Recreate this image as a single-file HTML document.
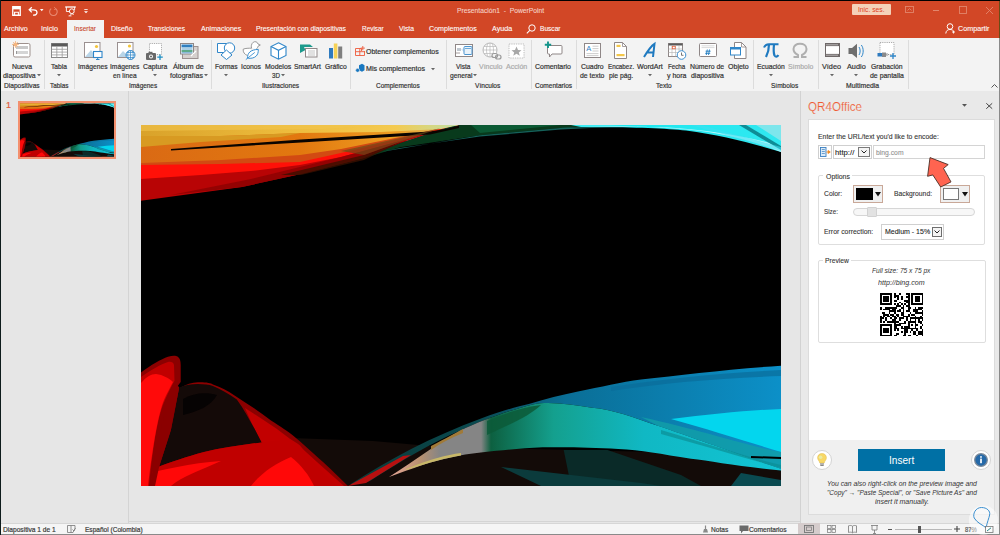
<!DOCTYPE html>
<html><head><meta charset="utf-8"><style>
*{margin:0;padding:0;box-sizing:border-box}
html,body{width:1000px;height:535px;overflow:hidden;background:#8A8A8A;font-family:"Liberation Sans",sans-serif;position:relative}
.a{position:absolute}
.t{position:absolute;white-space:nowrap;line-height:1;-webkit-text-stroke:0.2px currentColor}
.ns{-webkit-text-stroke:0}
.ls{-webkit-text-stroke:0.1px currentColor}
svg{overflow:visible}
</style></head><body>
<div class="a" style="left:0px;top:0px;width:1000px;height:1px;background:#000;"></div>
<div class="a" style="left:0px;top:0px;width:1px;height:535px;background:#0E1C1C;"></div>
<div class="a" style="left:999px;top:1px;width:1px;height:37px;background:#6A4C16;"></div>
<div class="a" style="left:1px;top:1px;width:998px;height:37px;background:#D24726;"></div>
<div class="a" style="left:67px;top:20px;width:37px;height:19px;background:#F3F3F3;"></div>
<div class="a" style="left:1px;top:38px;width:998px;height:53px;background:#F3F3F3;"></div>
<div class="a" style="left:1px;top:90.5px;width:998px;height:1px;background:#DCDCDC;"></div>
<div class="a" style="left:1px;top:91px;width:799px;height:433px;background:#E6E6E6;"></div>
<div class="a" style="left:128px;top:91px;width:1px;height:432px;background:#D4D4D4;"></div>
<div class="a" style="left:129px;top:521px;width:671px;height:1px;background:#D4D4D4;"></div>
<div class="a" style="left:800px;top:91px;width:199px;height:433px;background:#E9E9E9;"></div>
<div class="a" style="left:800px;top:91px;width:1px;height:433px;background:#D2D2D2;"></div>
<div class="a" style="left:1px;top:523px;width:998px;height:11px;background:#F5F5F5;"></div>
<div class="a" style="left:1px;top:523px;width:998px;height:1px;background:#D6D6D6;"></div>
<svg class="a" style="left:11.5px;top:5.5px;" width="9" height="10" viewBox="0 0 9 10"><path d="M0.75 0.75 H8.25 V9.25 H0.75Z" fill="none" stroke="#fff" stroke-width="1.3"/><rect x="0.75" y="0.75" width="7.5" height="2.6" fill="#fff"/><path d="M2.6 9.2 V6.3 H6.4 V9.2" fill="none" stroke="#fff" stroke-width="1.1"/></svg>
<svg class="a" style="left:27.5px;top:5.5px;" width="10" height="10" viewBox="0 0 10 10"><path d="M3.8 1.2 L1.2 3.8 L3.8 6.4 M1.2 3.8 H5.5 C7.6 3.8 9 5.2 9 6.6 C9 8 7.6 9.2 5.8 9.2 H5" fill="none" stroke="#fff" stroke-width="1.3"/></svg>
<svg class="a" style="left:39.8px;top:9.3px;" width="3.5" height="2.5" viewBox="0 0 3.5 2.5"><path d="M0 0 H3.5 L1.75 2.2Z" fill="#fff"/></svg>
<svg class="a" style="left:48.5px;top:6.5px;" width="9" height="9" viewBox="0 0 9 9"><path d="M6.3 1.4 A3.8 3.8 0 1 1 2.2 1.6" fill="none" stroke="#E98A72" stroke-width="1.1"/><path d="M5.2 0.2 L6.6 1.5 L5.4 3" fill="none" stroke="#E98A72" stroke-width="1"/></svg>
<svg class="a" style="left:64.5px;top:5.5px;" width="11" height="11" viewBox="0 0 11 11"><path d="M0.2 1 H10.8" stroke="#fff" stroke-width="1.3"/><path d="M1.4 1 V5.5 H4.5 M9.6 1 V4" fill="none" stroke="#fff" stroke-width="0.9"/><circle cx="6.8" cy="5.2" r="2.4" fill="none" stroke="#fff" stroke-width="1"/><path d="M4.8 9.8 C5.5 8 7 7.6 8.8 8.5 M3.5 9.9 H6.5" fill="none" stroke="#fff" stroke-width="0.8"/></svg>
<svg class="a" style="left:84px;top:8.5px;" width="4" height="4.5" viewBox="0 0 4 4.5"><path d="M0.3 0.5 H3.7" stroke="#fff" stroke-width="0.8"/><path d="M0 2.2 H4 L2 4.3Z" fill="#fff"/></svg>
<div class="t ls" style="left:456.75px;top:7.12px;font-size:7.3px;color:#F6D3C8;transform:scaleX(0.9228);transform-origin:0 0;">Presentación1&nbsp; -&nbsp; PowerPoint</div>
<div class="a" style="left:852px;top:4px;width:39px;height:11px;background:#F4D1B8;border-radius:1px"></div>
<div class="t ns" style="left:858.00px;top:6.45px;font-size:7.5px;color:#E0401E;transform:scaleX(0.8954);transform-origin:0 0;">Inic. ses.</div>
<svg class="a" style="left:905px;top:6px;" width="9" height="7" viewBox="0 0 9 7"><rect x="0.5" y="0.5" width="8" height="6" fill="none" stroke="#E2866C" stroke-width="0.9"/><path d="M2.5 4.5 L4.5 2.5 L6.5 4.5" fill="none" stroke="#E2866C" stroke-width="0.9"/></svg>
<div class="a" style="left:933px;top:10px;width:6px;height:1px;background:#E2866C;"></div>
<svg class="a" style="left:959px;top:6px;" width="8" height="8" viewBox="0 0 8 8"><rect x="0.5" y="0.5" width="7" height="7" fill="none" stroke="#E2866C" stroke-width="0.9"/></svg>
<svg class="a" style="left:986px;top:7px;" width="7" height="7" viewBox="0 0 7 7"><path d="M0 0 L7 7 M7 0 L0 7" stroke="#E2866C" stroke-width="0.9"/></svg>
<div class="t ls" style="left:4.30px;top:25.15px;font-size:7.5px;color:#FFFFFF;transform:scaleX(0.9477);transform-origin:0 0;">Archivo</div>
<div class="t ls" style="left:41.00px;top:25.15px;font-size:7.5px;color:#FFFFFF;transform:scaleX(0.9709);transform-origin:0 0;">Inicio</div>
<div class="t ls" style="left:111.00px;top:25.15px;font-size:7.5px;color:#FFFFFF;transform:scaleX(0.9209);transform-origin:0 0;">Diseño</div>
<div class="t ls" style="left:148.00px;top:25.15px;font-size:7.5px;color:#FFFFFF;transform:scaleX(0.8760);transform-origin:0 0;">Transiciones</div>
<div class="t ls" style="left:200.50px;top:25.15px;font-size:7.5px;color:#FFFFFF;transform:scaleX(0.9374);transform-origin:0 0;">Animaciones</div>
<div class="t ls" style="left:256.00px;top:25.15px;font-size:7.5px;color:#FFFFFF;transform:scaleX(0.9070);transform-origin:0 0;">Presentación con diapositivas</div>
<div class="t ls" style="left:362.00px;top:25.15px;font-size:7.5px;color:#FFFFFF;transform:scaleX(0.8555);transform-origin:0 0;">Revisar</div>
<div class="t ls" style="left:398.75px;top:25.15px;font-size:7.5px;color:#FFFFFF;transform:scaleX(0.9070);transform-origin:0 0;">Vista</div>
<div class="t ls" style="left:429.00px;top:25.15px;font-size:7.5px;color:#FFFFFF;transform:scaleX(0.9467);transform-origin:0 0;">Complementos</div>
<div class="t ls" style="left:491.75px;top:25.15px;font-size:7.5px;color:#FFFFFF;transform:scaleX(0.9583);transform-origin:0 0;">Ayuda</div>
<div class="t ls" style="left:540.00px;top:25.15px;font-size:7.5px;color:#FFFFFF;transform:scaleX(0.8782);transform-origin:0 0;">Buscar</div>
<div class="t ls" style="left:74.00px;top:25.15px;font-size:7.5px;color:#C9462A;transform:scaleX(0.8653);transform-origin:0 0;">Insertar</div>
<svg class="a" style="left:526px;top:24px;" width="10" height="10" viewBox="0 0 10 10"><circle cx="6" cy="4" r="3.2" fill="none" stroke="#fff" stroke-width="1"/><path d="M3.8 6.3 L0.8 9.3" stroke="#fff" stroke-width="1.1"/></svg>
<svg class="a" style="left:945px;top:23px;" width="11" height="11" viewBox="0 0 11 11"><circle cx="5" cy="3.5" r="2.8" fill="none" stroke="#fff" stroke-width="1"/><path d="M0.8 10.5 C1 7.5 3 6.5 5 6.5 C6.5 6.5 7.5 7 8 7.5" fill="none" stroke="#fff" stroke-width="1"/><path d="M8.5 7.5 V10.5 M7 9 H10" stroke="#fff" stroke-width="0.9"/></svg>
<div class="t ls" style="left:957.50px;top:25.15px;font-size:7.5px;color:#FFFFFF;transform:scaleX(0.9568);transform-origin:0 0;">Compartir</div>
<div class="a" style="left:44px;top:40px;width:1px;height:49px;background:#DCDCDC;"></div>
<div class="a" style="left:74px;top:40px;width:1px;height:49px;background:#DCDCDC;"></div>
<div class="a" style="left:211px;top:40px;width:1px;height:49px;background:#DCDCDC;"></div>
<div class="a" style="left:350px;top:40px;width:1px;height:49px;background:#DCDCDC;"></div>
<div class="a" style="left:445.5px;top:40px;width:1px;height:49px;background:#DCDCDC;"></div>
<div class="a" style="left:531px;top:40px;width:1px;height:49px;background:#DCDCDC;"></div>
<div class="a" style="left:575.5px;top:40px;width:1px;height:49px;background:#DCDCDC;"></div>
<div class="a" style="left:753px;top:40px;width:1px;height:49px;background:#DCDCDC;"></div>
<div class="a" style="left:817.5px;top:40px;width:1px;height:49px;background:#DCDCDC;"></div>
<div class="a" style="left:907.5px;top:40px;width:1px;height:49px;background:#DCDCDC;"></div>
<div class="t " style="left:12.00px;top:62.62px;font-size:7.3px;color:#333333;transform:scaleX(0.9478);transform-origin:0 0;">Nueva</div>
<div class="t " style="left:51.00px;top:62.62px;font-size:7.3px;color:#333333;transform:scaleX(0.9168);transform-origin:0 0;">Tabla</div>
<div class="t " style="left:77.75px;top:62.62px;font-size:7.3px;color:#333333;transform:scaleX(0.9202);transform-origin:0 0;">Imágenes</div>
<div class="t " style="left:110.20px;top:62.62px;font-size:7.3px;color:#333333;transform:scaleX(0.9170);transform-origin:0 0;">Imágenes</div>
<div class="t " style="left:142.50px;top:62.62px;font-size:7.3px;color:#333333;transform:scaleX(0.9395);transform-origin:0 0;">Captura</div>
<div class="t " style="left:173.00px;top:62.62px;font-size:7.3px;color:#333333;transform:scaleX(0.9971);transform-origin:0 0;">Álbum de</div>
<div class="t " style="left:215.00px;top:62.62px;font-size:7.3px;color:#333333;transform:scaleX(0.9094);transform-origin:0 0;">Formas</div>
<div class="t " style="left:241.25px;top:62.62px;font-size:7.3px;color:#333333;transform:scaleX(0.9299);transform-origin:0 0;">Iconos</div>
<div class="t " style="left:265.00px;top:62.62px;font-size:7.3px;color:#333333;transform:scaleX(0.9513);transform-origin:0 0;">Modelos</div>
<div class="t " style="left:294.40px;top:62.62px;font-size:7.3px;color:#333333;transform:scaleX(0.9324);transform-origin:0 0;">SmartArt</div>
<div class="t " style="left:324.75px;top:62.62px;font-size:7.3px;color:#333333;transform:scaleX(0.9244);transform-origin:0 0;">Gráfico</div>
<div class="t " style="left:455.60px;top:62.62px;font-size:7.3px;color:#333333;transform:scaleX(0.8945);transform-origin:0 0;">Vista</div>
<div class="t " style="left:535.00px;top:62.62px;font-size:7.3px;color:#333333;transform:scaleX(0.9540);transform-origin:0 0;">Comentario</div>
<div class="t " style="left:580.90px;top:62.62px;font-size:7.3px;color:#333333;transform:scaleX(0.9481);transform-origin:0 0;">Cuadro</div>
<div class="t " style="left:607.50px;top:62.62px;font-size:7.3px;color:#333333;transform:scaleX(0.8624);transform-origin:0 0;">Encabez.</div>
<div class="t " style="left:636.90px;top:62.62px;font-size:7.3px;color:#333333;transform:scaleX(0.9704);transform-origin:0 0;">WordArt</div>
<div class="t " style="left:667.75px;top:62.62px;font-size:7.3px;color:#333333;transform:scaleX(0.8502);transform-origin:0 0;">Fecha</div>
<div class="t " style="left:690.30px;top:62.62px;font-size:7.3px;color:#333333;transform:scaleX(0.9443);transform-origin:0 0;">Número de</div>
<div class="t " style="left:728.00px;top:62.62px;font-size:7.3px;color:#333333;transform:scaleX(0.9647);transform-origin:0 0;">Objeto</div>
<div class="t " style="left:756.90px;top:62.62px;font-size:7.3px;color:#333333;transform:scaleX(0.9274);transform-origin:0 0;">Ecuación</div>
<div class="t " style="left:822.00px;top:62.62px;font-size:7.3px;color:#333333;transform:scaleX(0.9960);transform-origin:0 0;">Vídeo</div>
<div class="t " style="left:847.00px;top:62.62px;font-size:7.3px;color:#333333;transform:scaleX(1.0016);transform-origin:0 0;">Audio</div>
<div class="t " style="left:870.80px;top:62.62px;font-size:7.3px;color:#333333;transform:scaleX(0.9352);transform-origin:0 0;">Grabación</div>
<div class="t " style="left:479.40px;top:62.62px;font-size:7.3px;color:#ABABAB;transform:scaleX(0.9590);transform-origin:0 0;">Vínculo</div>
<div class="t " style="left:505.60px;top:62.62px;font-size:7.3px;color:#ABABAB;transform:scaleX(0.9721);transform-origin:0 0;">Acción</div>
<div class="t " style="left:787.75px;top:62.62px;font-size:7.3px;color:#ABABAB;transform:scaleX(0.9428);transform-origin:0 0;">Símbolo</div>
<div class="t " style="left:2.70px;top:71.62px;font-size:7.3px;color:#333333;transform:scaleX(0.9480);transform-origin:0 0;">diapositiva</div>
<div class="t " style="left:113.00px;top:71.62px;font-size:7.3px;color:#333333;transform:scaleX(0.9085);transform-origin:0 0;">en línea</div>
<div class="t " style="left:169.60px;top:71.62px;font-size:7.3px;color:#333333;transform:scaleX(0.9567);transform-origin:0 0;">fotografías</div>
<div class="t " style="left:272.00px;top:71.62px;font-size:7.3px;color:#333333;transform:scaleX(0.8572);transform-origin:0 0;">3D</div>
<div class="t " style="left:449.60px;top:71.62px;font-size:7.3px;color:#333333;transform:scaleX(0.9198);transform-origin:0 0;">general</div>
<div class="t " style="left:579.60px;top:71.62px;font-size:7.3px;color:#333333;transform:scaleX(0.9394);transform-origin:0 0;">de texto</div>
<div class="t " style="left:608.75px;top:71.62px;font-size:7.3px;color:#333333;transform:scaleX(0.9335);transform-origin:0 0;">pie pág.</div>
<div class="t " style="left:666.50px;top:71.62px;font-size:7.3px;color:#333333;transform:scaleX(0.9611);transform-origin:0 0;">y hora</div>
<div class="t " style="left:690.80px;top:71.62px;font-size:7.3px;color:#333333;transform:scaleX(0.9509);transform-origin:0 0;">diapositiva</div>
<div class="t " style="left:869.60px;top:71.62px;font-size:7.3px;color:#333333;transform:scaleX(0.9491);transform-origin:0 0;">de pantalla</div>
<svg class="a" style="left:37px;top:74.3px;" width="4" height="3" viewBox="0 0 4 3"><path d="M0 0 H4 L2 2.2Z" fill="#666"/></svg>
<svg class="a" style="left:203.9px;top:74.3px;" width="4" height="3" viewBox="0 0 4 3"><path d="M0 0 H4 L2 2.2Z" fill="#666"/></svg>
<svg class="a" style="left:281.4px;top:74.3px;" width="4" height="3" viewBox="0 0 4 3"><path d="M0 0 H4 L2 2.2Z" fill="#666"/></svg>
<svg class="a" style="left:473.2px;top:74.3px;" width="4" height="3" viewBox="0 0 4 3"><path d="M0 0 H4 L2 2.2Z" fill="#666"/></svg>
<svg class="a" style="left:57px;top:74.3px;" width="4" height="3" viewBox="0 0 4 3"><path d="M0 0 H4 L2 2.2Z" fill="#666"/></svg>
<svg class="a" style="left:153px;top:74.3px;" width="4" height="3" viewBox="0 0 4 3"><path d="M0 0 H4 L2 2.2Z" fill="#666"/></svg>
<svg class="a" style="left:224px;top:74.3px;" width="4" height="3" viewBox="0 0 4 3"><path d="M0 0 H4 L2 2.2Z" fill="#666"/></svg>
<svg class="a" style="left:647.8px;top:74.3px;" width="4" height="3" viewBox="0 0 4 3"><path d="M0 0 H4 L2 2.2Z" fill="#666"/></svg>
<svg class="a" style="left:769px;top:74.3px;" width="4" height="3" viewBox="0 0 4 3"><path d="M0 0 H4 L2 2.2Z" fill="#666"/></svg>
<svg class="a" style="left:829.5px;top:74.3px;" width="4" height="3" viewBox="0 0 4 3"><path d="M0 0 H4 L2 2.2Z" fill="#666"/></svg>
<svg class="a" style="left:854.4px;top:74.3px;" width="4" height="3" viewBox="0 0 4 3"><path d="M0 0 H4 L2 2.2Z" fill="#666"/></svg>
<div class="t " style="left:3.75px;top:82.32px;font-size:7.3px;color:#333333;transform:scaleX(0.9058);transform-origin:0 0;">Diapositivas</div>
<div class="t " style="left:50.00px;top:82.32px;font-size:7.3px;color:#333333;transform:scaleX(0.8767);transform-origin:0 0;">Tablas</div>
<div class="t " style="left:128.75px;top:82.32px;font-size:7.3px;color:#333333;transform:scaleX(0.8781);transform-origin:0 0;">Imágenes</div>
<div class="t " style="left:262.25px;top:82.32px;font-size:7.3px;color:#333333;transform:scaleX(0.9065);transform-origin:0 0;">Ilustraciones</div>
<div class="t " style="left:376.25px;top:82.32px;font-size:7.3px;color:#333333;transform:scaleX(0.8912);transform-origin:0 0;">Complementos</div>
<div class="t " style="left:475.25px;top:82.32px;font-size:7.3px;color:#333333;transform:scaleX(0.9054);transform-origin:0 0;">Vínculos</div>
<div class="t " style="left:534.75px;top:82.32px;font-size:7.3px;color:#333333;transform:scaleX(0.8977);transform-origin:0 0;">Comentarios</div>
<div class="t " style="left:656.25px;top:82.32px;font-size:7.3px;color:#333333;transform:scaleX(0.8969);transform-origin:0 0;">Texto</div>
<div class="t " style="left:771.25px;top:82.32px;font-size:7.3px;color:#333333;transform:scaleX(0.8955);transform-origin:0 0;">Símbolos</div>
<div class="t " style="left:845.60px;top:82.32px;font-size:7.3px;color:#333333;transform:scaleX(0.9406);transform-origin:0 0;">Multimedia</div>
<div class="t " style="left:366.25px;top:47.82px;font-size:7.3px;color:#333333;transform:scaleX(0.9588);transform-origin:0 0;">Obtener complementos</div>
<div class="t " style="left:366.25px;top:65.32px;font-size:7.3px;color:#333333;transform:scaleX(0.9696);transform-origin:0 0;">Mis complementos</div>
<svg class="a" style="left:430.5px;top:67.8px;" width="4" height="3" viewBox="0 0 4 3"><path d="M0 0 H4 L2 2.2Z" fill="#666"/></svg>
<svg class="a" style="left:991px;top:84px;" width="7" height="4" viewBox="0 0 7 4"><path d="M0.5 3.5 L3.5 0.5 L6.5 3.5" fill="none" stroke="#555" stroke-width="1"/></svg>
<svg class="a" style="left:13px;top:43px;" width="18" height="15" viewBox="0 0 18 15"><rect x="0.5" y="0.5" width="16.5" height="13.5" rx="1.5" fill="#fff" stroke="#9E918D" stroke-width="1"/><rect x="3" y="3" width="12" height="3" fill="#C9C9C9"/><rect x="3" y="8" width="12" height="3" fill="#D5D5D5"/><rect x="3" y="8" width="1" height="3" fill="#999"/></svg>
<svg class="a" style="left:12px;top:41px;" width="7" height="7" viewBox="0 0 7 7"><circle cx="3.5" cy="3.5" r="2" fill="#F5B57E"/><path d="M3.5 0 V7 M0 3.5 H7 M1 1 L6 6 M6 1 L1 6" stroke="#F5B57E" stroke-width="0.8"/></svg>
<svg class="a" style="left:51px;top:43px;" width="17" height="15" viewBox="0 0 17 15"><rect x="0.5" y="0.5" width="16" height="14" fill="#fff" stroke="#888" stroke-width="1"/><rect x="0.5" y="0.5" width="16" height="3" fill="#5A5A5A"/><path d="M5.8 3.5 V14.5 M11.2 3.5 V14.5 M0.5 6.3 H16.5 M0.5 9.1 H16.5 M0.5 11.9 H16.5" stroke="#9A9A9A" stroke-width="0.8"/></svg>
<svg class="a" style="left:84px;top:42px;" width="19" height="18" viewBox="0 0 19 18"><rect x="0.5" y="0.5" width="15.5" height="15" fill="#fff" stroke="#9A9090" stroke-width="1"/><path d="M1 15 L7 8 L10 12 V15Z" fill="#B9D5E8"/><circle cx="12.5" cy="4.5" r="1.6" fill="#F3C43A"/><rect x="9.5" y="9.5" width="8.5" height="6" fill="#fff" stroke="#2F86C9" stroke-width="1.1"/><path d="M13.7 15.5 V17.3 M12 17.5 H15.5" stroke="#2F86C9" stroke-width="1"/></svg>
<svg class="a" style="left:117px;top:42px;" width="19" height="18" viewBox="0 0 19 18"><rect x="0.5" y="0.5" width="15.5" height="15" fill="#fff" stroke="#9A9090" stroke-width="1"/><path d="M1 15 L6 9 L9 12 V15Z" fill="#B9D5E8"/><circle cx="12.5" cy="4" r="1.6" fill="#F3C43A"/><circle cx="13.5" cy="13" r="4.5" fill="#fff" stroke="#2F86C9" stroke-width="1"/><path d="M9 13 H18 M13.5 8.5 V17.5 M10 10.5 H17 M10 15.5 H17 M11.5 9 C10.5 12 10.5 14 11.5 17 M15.5 9 C16.5 12 16.5 14 15.5 17" stroke="#2F86C9" stroke-width="0.7" fill="none"/></svg>
<svg class="a" style="left:146px;top:43px;" width="18" height="17" viewBox="0 0 18 17"><rect x="3.5" y="0.5" width="12" height="11" fill="#fff" stroke="#999" stroke-width="0.8" stroke-dasharray="1.2 1"/><rect x="0" y="10" width="10" height="7" rx="1" fill="#6A6A6A"/><rect x="2.5" y="8.8" width="4" height="2" fill="#6A6A6A"/><circle cx="5" cy="13.5" r="2" fill="#fff"/><circle cx="5" cy="13.5" r="1.1" fill="#6A6A6A"/><path d="M14 11.5 V17 M11.3 14.2 H16.8" stroke="#1F8FC4" stroke-width="1.3"/></svg>
<svg class="a" style="left:180px;top:43px;" width="19" height="16" viewBox="0 0 19 16"><rect x="2.5" y="3.5" width="15.5" height="12" fill="#D5D0CE" stroke="#9A9090" stroke-width="1"/><rect x="0.5" y="0.5" width="13" height="10.5" fill="#fff" stroke="#8F8787" stroke-width="1"/><rect x="1.5" y="1.5" width="11" height="3" fill="#2F7FC0"/><path d="M1.5 4.5 H12.5 V7 H1.5Z" fill="#A9CFE6"/><rect x="1.5" y="7" width="11" height="2" fill="#5DAA8A"/><rect x="1.5" y="9" width="11" height="1.5" fill="#8CB9D8"/><path d="M11 13 L16 8" stroke="#fff" stroke-width="1.2"/></svg>
<svg class="a" style="left:217px;top:42px;" width="19" height="18" viewBox="0 0 19 18"><path d="M0.5 1.5 H9.5 V10.5 H0.5Z" fill="#fff" stroke="#2F86C9" stroke-width="1"/><circle cx="12.5" cy="6" r="5.2" fill="#fff" stroke="#2F86C9" stroke-width="1"/><path d="M9.5 8 L15 13 L9.5 17.5 L4 13Z" fill="#fff" stroke="#2F86C9" stroke-width="1"/></svg>
<svg class="a" style="left:242px;top:40px;" width="19" height="20" viewBox="0 0 19 20"><path d="M9.6 8.2 C9 6.8 9.2 3.8 11.2 2.3 C13 1 15.5 1.8 16 4 L18.3 5 L16 6.3 C15.8 7.5 15.2 8.2 14.5 8.8 M5.5 15.5 C2.5 14.5 0.8 12 1.2 9.2 C3.5 8.2 6.5 8.2 9.6 8.2" fill="#fff" stroke="#8E8E8E" stroke-width="0.9"/><path d="M5.6 18.2 C5.2 13 8.6 9.6 16.3 9.4 C16.6 15.6 13 18.6 6.6 18.3Z" fill="#fff" stroke="#3A8FD0" stroke-width="1"/><path d="M3.8 19.6 L12.8 12.4" stroke="#3A8FD0" stroke-width="0.9"/></svg>
<svg class="a" style="left:270px;top:42px;" width="17" height="18" viewBox="0 0 17 18"><path d="M8.5 0.8 L16 4.5 V13.5 L8.5 17.2 L1 13.5 V4.5Z" fill="#fff" stroke="#2F86C9" stroke-width="1.1"/><path d="M1 4.5 L8.5 8.3 L16 4.5 M8.5 8.3 V17" fill="none" stroke="#2F86C9" stroke-width="1.1"/></svg>
<svg class="a" style="left:300px;top:44px;" width="18" height="14" viewBox="0 0 18 14"><path d="M0 0.5 H10 L13 3 H4 L5.5 6 L0 9Z" fill="#1D9A8C"/><rect x="5.5" y="4.5" width="11.5" height="8.5" fill="#fff" stroke="#8F8787" stroke-width="1"/><path d="M8 7 H15 M8 9 H15 M8 11 H15" stroke="#9A9A9A" stroke-width="0.6"/></svg>
<svg class="a" style="left:329px;top:43px;" width="14" height="16" viewBox="0 0 14 16"><rect x="0" y="5" width="4" height="10.5" fill="#2F7BBF"/><rect x="4.8" y="0.5" width="3.6" height="15" fill="#F6D257"/><rect x="9.2" y="3.5" width="4" height="12" fill="#7F7F7F"/></svg>
<svg class="a" style="left:355px;top:46px;" width="10" height="10" viewBox="0 0 10 10"><path d="M0.5 2.5 H6.5 M0.5 2.5 V9.5 H9.5 V5 M4.8 2.5 V9.5 M0.5 5.7 H9.5 M6.5 2.5 V5" fill="none" stroke="#EE5A3A" stroke-width="0.9"/><path d="M7.8 0 V4.2 M5.7 2.1 H9.9" stroke="#EE5A3A" stroke-width="0.9"/></svg>
<svg class="a" style="left:355px;top:63px;" width="10" height="10" viewBox="0 0 10 10"><path d="M4 2.2 L7 0.8 L9.5 2.2 V7.2 L7 8.8 L4 7.2Z" fill="#1A78C0"/><circle cx="2.6" cy="7.3" r="2" fill="#1A78C0" stroke="#F3F3F3" stroke-width="0.6"/></svg>
<svg class="a" style="left:455px;top:44px;" width="18" height="13" viewBox="0 0 18 13"><rect x="0.5" y="0.5" width="17" height="12" fill="#fff" stroke="#8F8787" stroke-width="1"/><path d="M0.5 9 H5" stroke="#8F8787" stroke-width="0.8"/><rect x="2" y="4" width="4" height="3" fill="#C0C8D0"/><path d="M6 5.5 L9 4 V8 Z" fill="#D6E6F3"/><rect x="9" y="2.5" width="8" height="8" rx="1" fill="#EAF3FA" stroke="#4C95CF" stroke-width="1"/><path d="M10 4.5 H16" stroke="#4C95CF" stroke-width="0.8"/></svg>
<svg class="a" style="left:482px;top:42px;" width="20" height="18" viewBox="0 0 20 18"><circle cx="8" cy="8" r="7" fill="#fff" stroke="#B8B8B8" stroke-width="1"/><path d="M1 8 H15 M8 1 V15 M2 4.5 H14 M2 11.5 H14 M6 1.5 C4 5 4 11 6 14.5 M10 1.5 C12 5 12 11 10 14.5" stroke="#B8B8B8" stroke-width="0.7" fill="none"/><rect x="10" y="11.5" width="5.5" height="4" rx="2" fill="#f3f3f3" stroke="#9A9A9A" stroke-width="1.2"/><rect x="13.5" y="13" width="5.5" height="4" rx="2" fill="none" stroke="#9A9A9A" stroke-width="1.2"/></svg>
<svg class="a" style="left:508px;top:43px;" width="17" height="16" viewBox="0 0 17 16"><rect x="1" y="1" width="15" height="14" fill="#fff" stroke="#B0B0B0" stroke-width="0.8" stroke-dasharray="1.3 1"/><path d="M8.5 3.5 L10 7 L13.5 7.2 L10.8 9.4 L11.8 12.8 L8.5 10.8 L5.2 12.8 L6.2 9.4 L3.5 7.2 L7 7Z" fill="#A8A8A8"/></svg>
<svg class="a" style="left:544px;top:41px;" width="19" height="18" viewBox="0 0 19 18"><path d="M3.5 4.5 H17 Q18 4.5 18 5.5 V12 Q18 13 17 13 H8 L5.5 16 V13 H4.5 Q3.5 13 3.5 12Z" fill="#fff" stroke="#8F8787" stroke-width="1"/><path d="M4 0.5 V7 M0.8 3.7 H7.2" stroke="#14958B" stroke-width="1.9"/></svg>
<svg class="a" style="left:584px;top:43px;" width="17" height="15" viewBox="0 0 17 15"><rect x="0.5" y="0.5" width="16" height="14" fill="#fff" stroke="#8F8787" stroke-width="1"/><text x="2.2" y="8.3" font-family="Liberation Sans" font-size="7.5" fill="#2F7FC4">A</text><path d="M8.5 3.2 H14.5 M8.5 5.6 H14.5 M8.5 8 H14.5 M2.5 10.6 H14.5 M2.5 12.6 H14.5" stroke="#ABABAB" stroke-width="0.6"/></svg>
<svg class="a" style="left:614px;top:42px;" width="13" height="17" viewBox="0 0 13 17"><path d="M0.5 0.5 H8.5 L12.5 4.5 V16.5 H0.5Z" fill="#fff" stroke="#8F8787" stroke-width="1"/><path d="M8.5 0.5 V4.5 H12.5" fill="none" stroke="#8F8787" stroke-width="0.8"/><rect x="2.5" y="2.8" width="4" height="2.2" fill="#F4C74A"/><rect x="2.5" y="12" width="8" height="2.2" fill="#F4C74A"/></svg>
<svg class="a" style="left:643px;top:43px;" width="13" height="15" viewBox="0 0 13 15"><path d="M1 14 C4 9 8 3 11.5 0.8 L10 14 M3.5 9.5 H10.5" fill="none" stroke="#1F7AC0" stroke-width="2"/></svg>
<svg class="a" style="left:668px;top:43px;" width="19" height="17" viewBox="0 0 19 17"><rect x="0.5" y="0.5" width="14" height="13" fill="#fff" stroke="#8F8787" stroke-width="1"/><rect x="0.5" y="0.5" width="14" height="2" fill="#5A5A5A"/><path d="M4 2.5 V13.5 M7.5 2.5 V13.5 M11 2.5 V13.5 M0.5 6 H14.5 M0.5 9.5 H14.5" stroke="#B0B0B0" stroke-width="0.6"/><rect x="4.3" y="3.3" width="2.9" height="2.5" fill="none" stroke="#E8633F" stroke-width="0.8"/><circle cx="13.5" cy="12" r="4.3" fill="#fff" stroke="#3A8ED0" stroke-width="1"/><path d="M13.5 9.5 V12.3 H15.5" fill="none" stroke="#555" stroke-width="0.8"/></svg>
<svg class="a" style="left:699px;top:43px;" width="18" height="14" viewBox="0 0 18 14"><rect x="0.5" y="0.5" width="17" height="13" rx="1" fill="#fff" stroke="#8F8787" stroke-width="1"/><path d="M2.5 2.8 H15.5 M2.5 4.6 H15.5" stroke="#D0D0D0" stroke-width="0.8"/><path d="M8.3 6.5 L7.3 12 M10.5 6.5 L9.5 12 M6.6 8.2 H11.6 M6.2 10.3 H11.2" stroke="#1F7AC0" stroke-width="0.9"/></svg>
<svg class="a" style="left:730px;top:42px;" width="17" height="17" viewBox="0 0 17 17"><path d="M4.5 0.5 H11.5 L16 5 V16.5 H4.5Z" fill="#fff" stroke="#8F8787" stroke-width="1"/><path d="M11.5 0.5 V5 H16" fill="none" stroke="#8F8787" stroke-width="0.8"/><rect x="0.5" y="5.5" width="10" height="7.5" fill="#fff" stroke="#2F86C9" stroke-width="1"/><rect x="0.5" y="5.5" width="10" height="2" fill="#2F86C9"/></svg>
<svg class="a" style="left:763px;top:43px;" width="16" height="15" viewBox="0 0 16 15"><path d="M1 4.5 C2 2 3 1.2 6 1.2 H15.5" fill="none" stroke="#1F7AC0" stroke-width="2"/><path d="M6 1.5 C6 6 5 10 3 14" fill="none" stroke="#1F7AC0" stroke-width="2.2"/><path d="M11 1.5 C10.5 6 10.5 10 11.5 12.5 C12.5 14 14.5 14 15.3 12" fill="none" stroke="#1F7AC0" stroke-width="2.2"/></svg>
<svg class="a" style="left:792px;top:43px;" width="16" height="15" viewBox="0 0 16 15"><path d="M1.5 14 H6 V12 C3 10.5 1.5 8.5 1.5 6 C1.5 2.5 4.5 0.8 8 0.8 C11.5 0.8 14.5 2.5 14.5 6 C14.5 8.5 13 10.5 10 12 V14 H14.5" fill="none" stroke="#AFAFAF" stroke-width="2"/></svg>
<svg class="a" style="left:825px;top:43px;" width="15" height="14" viewBox="0 0 15 14"><rect x="0.5" y="0.5" width="14" height="13" fill="#fff" stroke="#6E6868" stroke-width="1"/><rect x="0.5" y="0.5" width="14" height="2.6" fill="#6E6868"/><rect x="0.5" y="10.9" width="14" height="2.6" fill="#6E6868"/><rect x="1.5" y="1.3" width="1" height="1" fill="#fff"/><rect x="1.5" y="11.7" width="1" height="1" fill="#fff"/><rect x="3.5" y="1.3" width="1" height="1" fill="#fff"/><rect x="3.5" y="11.7" width="1" height="1" fill="#fff"/><rect x="5.5" y="1.3" width="1" height="1" fill="#fff"/><rect x="5.5" y="11.7" width="1" height="1" fill="#fff"/><rect x="7.5" y="1.3" width="1" height="1" fill="#fff"/><rect x="7.5" y="11.7" width="1" height="1" fill="#fff"/><rect x="9.5" y="1.3" width="1" height="1" fill="#fff"/><rect x="9.5" y="11.7" width="1" height="1" fill="#fff"/><rect x="11.5" y="1.3" width="1" height="1" fill="#fff"/><rect x="11.5" y="11.7" width="1" height="1" fill="#fff"/></svg>
<svg class="a" style="left:848px;top:43px;" width="17" height="16" viewBox="0 0 17 16"><path d="M0.5 5 H4 L9 0.8 V15 L4 11 H0.5Z" fill="#6E6E6E"/><path d="M11 4 C12.5 6 12.5 10 11 12 M13.3 2 C15.8 5 15.8 11 13.3 14" fill="none" stroke="#2F86C9" stroke-width="1"/></svg>
<svg class="a" style="left:877px;top:42px;" width="19" height="17" viewBox="0 0 19 17"><rect x="3" y="0.5" width="14" height="12" fill="#fff" stroke="#999" stroke-width="0.8" stroke-dasharray="1.2 1"/><rect x="0.5" y="11" width="4.5" height="3.5" fill="#2F7BBF"/><rect x="5" y="10.5" width="4" height="4.5" fill="#8A8A8A"/><path d="M9.5 11 L11 12.5 L9.5 14" fill="none" stroke="#555" stroke-width="0.6"/><path d="M16 11 V17 M13 14 H19" stroke="#2F86C9" stroke-width="1.3"/></svg>
<svg class="a" style="left:141px;top:125px;overflow:hidden" width="640" height="361" viewBox="0 0 640 361">
<defs>
<linearGradient id="gold" x1="0" y1="0" x2="1" y2="0"><stop offset="0" stop-color="#D9A22A"/><stop offset="0.45" stop-color="#EDBB3C"/><stop offset="0.8" stop-color="#F4CA50"/><stop offset="1" stop-color="#BFE0A8"/></linearGradient>
<linearGradient id="orng" x1="0" y1="0" x2="1" y2="0"><stop offset="0" stop-color="#DA6A14"/><stop offset="0.5" stop-color="#E2780F"/><stop offset="0.8" stop-color="#EE9E22"/><stop offset="1" stop-color="#D6C070"/></linearGradient>
<linearGradient id="cyan" x1="0" y1="0" x2="1" y2="0"><stop offset="0" stop-color="#20C8C8"/><stop offset="0.3" stop-color="#10E8F0"/><stop offset="1" stop-color="#30E8F0"/></linearGradient>
<linearGradient id="blue" x1="0" y1="0" x2="0" y2="1"><stop offset="0" stop-color="#0A5E7E"/><stop offset="0.35" stop-color="#0B82B4"/><stop offset="1" stop-color="#0C9AD0"/></linearGradient>
<linearGradient id="teal" x1="0" y1="0" x2="1" y2="0"><stop offset="0" stop-color="#0E6A44"/><stop offset="0.25" stop-color="#15A08E"/><stop offset="0.55" stop-color="#10B8C4"/><stop offset="1" stop-color="#10C8D8"/></linearGradient>
</defs>
<rect x="0" y="0" width="640" height="361" fill="#000"/>
<!-- top right cyan -->
<path d="M250 0 H640 V27 C610 18 580 10 545 5.5 C520 2.5 470 1.5 412 2.5 C380 4 350 7 340 9.4 L268 20Z" fill="url(#cyan)"/>
<path d="M420 1 C470 0 520 1 560 6 C590 10 615 17 640 27 L640 21 C610 12 570 5 520 2Z" fill="#D8FAFF" opacity="0.8"/>
<path d="M615 0 L640 16 V0Z" fill="#7EE6EC"/><path d="M605 0 L640 21 V25 L598 0Z" fill="#0E8C96"/>
<path d="M560 0 L640 22 V26 L550 0Z" fill="#40E0F0" opacity="0.6"/>
<!-- green wedge -->
<path d="M223 33 L259 22.2 L339 10.2 L419 3 L440 2 L430 0 L311 0 L259 18Z" fill="#083A1C"/>
<path d="M330 0 L420 0 L400 2 L339 8 Z" fill="#0B5A34"/>
<path d="M240 27 L339 10.2 L419 3 L470 2 L420 4.5 L339 11.5 L259 23Z" fill="#1A7A70" opacity="0.8"/>
<!-- top left warm region -->
<path d="M0 0 H318 L311 1 L259 18 L223 33 L160 49 L101 62 L0 75.75Z" fill="#B80405"/>
<path d="M0 0 H318 L311 1 L259 16 L200 32 L159 40 L110 46 L60 50 L0 54Z" fill="#FF1008"/>
<path d="M0 0 H318 L311 1 L259 14 L200 28 L159 37 L80 39 L0 40Z" fill="#D24A12"/>
<path d="M0 0 H318 L311 1 L259 12 L200 24 L159 30 L80 35 L0 38Z" fill="url(#orng)"/>
<path d="M0 0 H318 L300 4 L240 7 L159 8 L80 11 L0 12Z" fill="url(#gold)"/>
<path d="M0 11 L80 11 L159 8 L140 12 L60 17 L0 22Z" fill="#D89A22"/>
<path d="M0 0 H250 L180 4 L80 5 L0 6Z" fill="#F2C54C" opacity="0.6"/>
<path d="M30 24 L160 14.5 L289 6.5 L305 4 L318 0.5 L318 3 L289 9.5 L160 17.5 L30 25.4Z" fill="#0A0400"/>
<path d="M110 54 L200 32 L259 16 L223 33 L160 49 L101 62 L30 70Z" fill="#900202" opacity="0.9"/>
<path d="M140 50 L223 30 L262 16 L223 35 L160 50Z" fill="#3A1000" opacity="0.8"/>
<path d="M200 26 L259 13 L300 3 L259 17 L223 30Z" fill="#6A4A18" opacity="0.7"/>
<!-- bottom brown base -->
<path d="M150 361 L150 313 L232 316 L300 322 L640 330 V361Z" fill="#130B08"/>
<!-- bottom right blue swoosh -->
<linearGradient id="bluel" gradientUnits="userSpaceOnUse" x1="209" y1="0" x2="640" y2="0"><stop offset="0" stop-color="#0A3A38"/><stop offset="0.3" stop-color="#0A4A50"/><stop offset="0.5" stop-color="#0A6E96"/><stop offset="1" stop-color="#0C90C8"/></linearGradient>
<linearGradient id="tealg" gradientUnits="userSpaceOnUse" x1="248" y1="0" x2="640" y2="0"><stop offset="0" stop-color="#E8A898"/><stop offset="0.08" stop-color="#B89070"/><stop offset="0.13" stop-color="#858585"/><stop offset="0.235" stop-color="#858585"/><stop offset="0.26" stop-color="#0D6040"/><stop offset="0.42" stop-color="#14A08E"/><stop offset="0.65" stop-color="#10B8C4"/><stop offset="1" stop-color="#12C4D4"/></linearGradient>
<path d="M209 359.5 C250 333 290 312 340 293.4 C360 286 375 282 388.7 278.8 C405 274 420 270 437 266.6 C460 262 480 257 500 254.5 C540 250 590 244 640 240.7 V343.7 C600 330 550 312 517 300.8 C495 293 470 284 451 282.7 C430 280 410 276 391.6 279.4 C370 285 340 295 319 305.8 C290 318 260 336 229 356Z" fill="url(#bluel)"/>
<path d="M470 262 C520 254 580 248 640 245 V251 C580 253 520 258 470 266Z" fill="#0A6C9A" opacity="0.7"/>
<path d="M530 294 C570 289 610 285 640 284 V327 C610 318 570 305 530 294Z" fill="#03D6EE"/>
<path d="M500 292 C560 305 610 322 640 327 V343.7 C600 330 550 312 517 300.8Z" fill="#12A0A8" opacity="0.8"/>
<!-- teal band -->
<path d="M248 352 C275 335 300 316 319 305.8 C340 295 370 285 391.6 279.4 C410 276 430 280 451 282.7 C470 284 495 293 517 300.8 C550 312 600 330 640 343.7 V345.4 C600 342 570 336 550 333.8 C520 329 500 325 477.4 324 C450 322 420 322 401.5 322.3 C370 324 340 327 319 330.5 C290 336 270 344 248 352Z" fill="url(#tealg)"/>
<path d="M346 296 C365 288 382 282 400 280 C390 290 368 300 346 310Z" fill="#0C5A38" opacity="0.85"/>
<path d="M520 305 C570 320 610 333 640 340 V343 C600 332 560 320 520 309Z" fill="#0B8F96" opacity="0.7"/>
<path d="M610 331 L640 332 V334 L610 333Z" fill="#000"/>
<path d="M290 321 C305 313 315 308 322 304 V308 C310 313 300 318 290 325Z" fill="#A07A38"/>
<path d="M265 345 C290 337 305 333 320 330.5 V328 C305 330 290 334 265 344Z" fill="#C8B868"/>
<!-- dark teal patches -->
<path d="M422.7 325 L466.5 325 L540 350 L560 361 L430 361 Z" fill="#0A2A28"/>
<path d="M360 342 L500 358 L520 361 L400 361Z" fill="#0B3B3C"/>
<path d="M600 348 L640 355 V361 L590 361Z" fill="#0A4A50"/>
<path d="M207 361 L262 331 L270 330 L225 358Z" fill="#B81010"/>
<!-- bottom left reds -->
<path d="M27 275 C33 265 45 257.5 56.9 257.2 C65 257 70 258 71.9 259.4 C80 262 87 266 92.8 269.9 C105 278 118 286 130 295.4 C140 302 147 306 152.6 311 C162 319 170 326 178 333.4 C190 344 198 352 207 361 H0 V275Z" fill="#8B0000"/>
<path d="M104 283 C115 290 122 295 130 300 C145 310 160 322 176 337 L203 361 H189 C182 354 172 346 162 339 C148 330 132 321 120.6 317.4 L113.8 304.3 C110 297 107 290 104 283Z" fill="#C20000"/>
<path d="M18.2 341.4 L29.9 305 L38.2 262.4 C45 259.8 50 259.2 56.9 259.1 C63 259.1 68 259.8 71.9 260.9 C80 264 88 269 95.8 274.4 C103 284 108 294 113.8 304.3 L120.6 317.4 C100 320 80 323 63 327 C45 332 30 337 18.2 341.4Z" fill="#140A08"/>
<path d="M42 274 C52 268 65 267 76 270 C70 281 58 286 42 290Z" fill="#060303"/>
<path d="M0 361 V343 L18.2 341.4 C30 337 45 332 63 327 C80 323 100 320 120.6 317.4 C130 316 140 315 149.4 314.2 C153 316 156 318 159 320.6 C165 328 172 336 178 343 L196 361Z" fill="#C00000"/>
<path d="M0 361 V350 C20 345 50 338 80 336 C60 345 40 352 30 361Z" fill="#FF0808"/>
<path d="M110 361 C120 348 135 338 150 332 C160 340 168 350 173 361Z" fill="#FF0808"/>
<path d="M0 247.5 C10 240 20 234 27 231.7 C31 230.5 35 230.5 36.5 231.5 C39 233 39.7 236 39.7 240 L39.7 257 C36 262 33 266 30 272 C22 290 15 320 10 361 H0Z" fill="#8B0000"/>
<path d="M0 252 C10 245 20 239 27 237 C30 236.3 32.5 237.5 33 240 L33.5 256 C30 262 27 268 24 275 C17 290 12 320 8 361 H0Z" fill="#C00000"/>
<path d="M0 258 C5 252 10 249 15 249 C22 250 28 253 32 257 C29 263 26 268 23 275 C17 290 12 320 7 361 H0Z" fill="#FF0A0A"/>
<path d="M33.5 256 L38.2 262.4 L29.9 305 L18.2 341.4 L14 361 H9 L14 330 L23 292 L27 270Z" fill="#8B0000"/>
</svg>
<div class="a" style="left:18px;top:101px;width:98px;height:58px;background:#F3906E"></div>
<svg class="a" style="left:20px;top:103px;overflow:hidden" width="94" height="54" viewBox="0 0 640 361">
<defs>
<linearGradient id="tgold" x1="0" y1="0" x2="1" y2="0"><stop offset="0" stop-color="#D9A22A"/><stop offset="0.45" stop-color="#EDBB3C"/><stop offset="0.8" stop-color="#F4CA50"/><stop offset="1" stop-color="#BFE0A8"/></linearGradient>
<linearGradient id="torng" x1="0" y1="0" x2="1" y2="0"><stop offset="0" stop-color="#DA6A14"/><stop offset="0.5" stop-color="#E2780F"/><stop offset="0.8" stop-color="#EE9E22"/><stop offset="1" stop-color="#D6C070"/></linearGradient>
<linearGradient id="tcyan" x1="0" y1="0" x2="1" y2="0"><stop offset="0" stop-color="#20C8C8"/><stop offset="0.3" stop-color="#10E8F0"/><stop offset="1" stop-color="#30E8F0"/></linearGradient>
<linearGradient id="tblue" x1="0" y1="0" x2="0" y2="1"><stop offset="0" stop-color="#0A5E7E"/><stop offset="0.35" stop-color="#0B82B4"/><stop offset="1" stop-color="#0C9AD0"/></linearGradient>
<linearGradient id="tteal" x1="0" y1="0" x2="1" y2="0"><stop offset="0" stop-color="#0E6A44"/><stop offset="0.25" stop-color="#15A08E"/><stop offset="0.55" stop-color="#10B8C4"/><stop offset="1" stop-color="#10C8D8"/></linearGradient>
</defs>
<rect x="0" y="0" width="640" height="361" fill="#000"/>
<!-- top right cyan -->
<path d="M250 0 H640 V27 C610 18 580 10 545 5.5 C520 2.5 470 1.5 412 2.5 C380 4 350 7 340 9.4 L268 20Z" fill="url(#tcyan)"/>
<path d="M420 1 C470 0 520 1 560 6 C590 10 615 17 640 27 L640 21 C610 12 570 5 520 2Z" fill="#D8FAFF" opacity="0.8"/>
<path d="M615 0 L640 16 V0Z" fill="#7EE6EC"/><path d="M605 0 L640 21 V25 L598 0Z" fill="#0E8C96"/>
<path d="M560 0 L640 22 V26 L550 0Z" fill="#40E0F0" opacity="0.6"/>
<!-- green wedge -->
<path d="M223 33 L259 22.2 L339 10.2 L419 3 L440 2 L430 0 L311 0 L259 18Z" fill="#083A1C"/>
<path d="M330 0 L420 0 L400 2 L339 8 Z" fill="#0B5A34"/>
<path d="M240 27 L339 10.2 L419 3 L470 2 L420 4.5 L339 11.5 L259 23Z" fill="#1A7A70" opacity="0.8"/>
<!-- top left warm region -->
<path d="M0 0 H318 L311 1 L259 18 L223 33 L160 49 L101 62 L0 75.75Z" fill="#B80405"/>
<path d="M0 0 H318 L311 1 L259 16 L200 32 L159 40 L110 46 L60 50 L0 54Z" fill="#FF1008"/>
<path d="M0 0 H318 L311 1 L259 14 L200 28 L159 37 L80 39 L0 40Z" fill="#D24A12"/>
<path d="M0 0 H318 L311 1 L259 12 L200 24 L159 30 L80 35 L0 38Z" fill="url(#torng)"/>
<path d="M0 0 H318 L300 4 L240 7 L159 8 L80 11 L0 12Z" fill="url(#tgold)"/>
<path d="M0 11 L80 11 L159 8 L140 12 L60 17 L0 22Z" fill="#D89A22"/>
<path d="M0 0 H250 L180 4 L80 5 L0 6Z" fill="#F2C54C" opacity="0.6"/>
<path d="M30 24 L160 14.5 L289 6.5 L305 4 L318 0.5 L318 3 L289 9.5 L160 17.5 L30 25.4Z" fill="#0A0400"/>
<path d="M110 54 L200 32 L259 16 L223 33 L160 49 L101 62 L30 70Z" fill="#900202" opacity="0.9"/>
<path d="M140 50 L223 30 L262 16 L223 35 L160 50Z" fill="#3A1000" opacity="0.8"/>
<path d="M200 26 L259 13 L300 3 L259 17 L223 30Z" fill="#6A4A18" opacity="0.7"/>
<!-- bottom brown base -->
<path d="M150 361 L150 313 L232 316 L300 322 L640 330 V361Z" fill="#130B08"/>
<!-- bottom right blue swoosh -->
<linearGradient id="tbluel" gradientUnits="userSpaceOnUse" x1="209" y1="0" x2="640" y2="0"><stop offset="0" stop-color="#0A3A38"/><stop offset="0.3" stop-color="#0A4A50"/><stop offset="0.5" stop-color="#0A6E96"/><stop offset="1" stop-color="#0C90C8"/></linearGradient>
<linearGradient id="ttealg" gradientUnits="userSpaceOnUse" x1="248" y1="0" x2="640" y2="0"><stop offset="0" stop-color="#E8A898"/><stop offset="0.08" stop-color="#B89070"/><stop offset="0.13" stop-color="#858585"/><stop offset="0.235" stop-color="#858585"/><stop offset="0.26" stop-color="#0D6040"/><stop offset="0.42" stop-color="#14A08E"/><stop offset="0.65" stop-color="#10B8C4"/><stop offset="1" stop-color="#12C4D4"/></linearGradient>
<path d="M209 359.5 C250 333 290 312 340 293.4 C360 286 375 282 388.7 278.8 C405 274 420 270 437 266.6 C460 262 480 257 500 254.5 C540 250 590 244 640 240.7 V343.7 C600 330 550 312 517 300.8 C495 293 470 284 451 282.7 C430 280 410 276 391.6 279.4 C370 285 340 295 319 305.8 C290 318 260 336 229 356Z" fill="url(#tbluel)"/>
<path d="M470 262 C520 254 580 248 640 245 V251 C580 253 520 258 470 266Z" fill="#0A6C9A" opacity="0.7"/>
<path d="M530 294 C570 289 610 285 640 284 V327 C610 318 570 305 530 294Z" fill="#03D6EE"/>
<path d="M500 292 C560 305 610 322 640 327 V343.7 C600 330 550 312 517 300.8Z" fill="#12A0A8" opacity="0.8"/>
<!-- teal band -->
<path d="M248 352 C275 335 300 316 319 305.8 C340 295 370 285 391.6 279.4 C410 276 430 280 451 282.7 C470 284 495 293 517 300.8 C550 312 600 330 640 343.7 V345.4 C600 342 570 336 550 333.8 C520 329 500 325 477.4 324 C450 322 420 322 401.5 322.3 C370 324 340 327 319 330.5 C290 336 270 344 248 352Z" fill="url(#ttealg)"/>
<path d="M346 296 C365 288 382 282 400 280 C390 290 368 300 346 310Z" fill="#0C5A38" opacity="0.85"/>
<path d="M520 305 C570 320 610 333 640 340 V343 C600 332 560 320 520 309Z" fill="#0B8F96" opacity="0.7"/>
<path d="M610 331 L640 332 V334 L610 333Z" fill="#000"/>
<path d="M290 321 C305 313 315 308 322 304 V308 C310 313 300 318 290 325Z" fill="#A07A38"/>
<path d="M265 345 C290 337 305 333 320 330.5 V328 C305 330 290 334 265 344Z" fill="#C8B868"/>
<!-- dark teal patches -->
<path d="M422.7 325 L466.5 325 L540 350 L560 361 L430 361 Z" fill="#0A2A28"/>
<path d="M360 342 L500 358 L520 361 L400 361Z" fill="#0B3B3C"/>
<path d="M600 348 L640 355 V361 L590 361Z" fill="#0A4A50"/>
<path d="M207 361 L262 331 L270 330 L225 358Z" fill="#B81010"/>
<!-- bottom left reds -->
<path d="M27 275 C33 265 45 257.5 56.9 257.2 C65 257 70 258 71.9 259.4 C80 262 87 266 92.8 269.9 C105 278 118 286 130 295.4 C140 302 147 306 152.6 311 C162 319 170 326 178 333.4 C190 344 198 352 207 361 H0 V275Z" fill="#8B0000"/>
<path d="M104 283 C115 290 122 295 130 300 C145 310 160 322 176 337 L203 361 H189 C182 354 172 346 162 339 C148 330 132 321 120.6 317.4 L113.8 304.3 C110 297 107 290 104 283Z" fill="#C20000"/>
<path d="M18.2 341.4 L29.9 305 L38.2 262.4 C45 259.8 50 259.2 56.9 259.1 C63 259.1 68 259.8 71.9 260.9 C80 264 88 269 95.8 274.4 C103 284 108 294 113.8 304.3 L120.6 317.4 C100 320 80 323 63 327 C45 332 30 337 18.2 341.4Z" fill="#140A08"/>
<path d="M42 274 C52 268 65 267 76 270 C70 281 58 286 42 290Z" fill="#060303"/>
<path d="M0 361 V343 L18.2 341.4 C30 337 45 332 63 327 C80 323 100 320 120.6 317.4 C130 316 140 315 149.4 314.2 C153 316 156 318 159 320.6 C165 328 172 336 178 343 L196 361Z" fill="#C00000"/>
<path d="M0 361 V350 C20 345 50 338 80 336 C60 345 40 352 30 361Z" fill="#FF0808"/>
<path d="M110 361 C120 348 135 338 150 332 C160 340 168 350 173 361Z" fill="#FF0808"/>
<path d="M0 247.5 C10 240 20 234 27 231.7 C31 230.5 35 230.5 36.5 231.5 C39 233 39.7 236 39.7 240 L39.7 257 C36 262 33 266 30 272 C22 290 15 320 10 361 H0Z" fill="#8B0000"/>
<path d="M0 252 C10 245 20 239 27 237 C30 236.3 32.5 237.5 33 240 L33.5 256 C30 262 27 268 24 275 C17 290 12 320 8 361 H0Z" fill="#C00000"/>
<path d="M0 258 C5 252 10 249 15 249 C22 250 28 253 32 257 C29 263 26 268 23 275 C17 290 12 320 7 361 H0Z" fill="#FF0A0A"/>
<path d="M33.5 256 L38.2 262.4 L29.9 305 L18.2 341.4 L14 361 H9 L14 330 L23 292 L27 270Z" fill="#8B0000"/>
</svg>
<div class="t " style="left:6.00px;top:101.38px;font-size:9px;color:#E0603F;">1</div>
<div class="t ns" style="left:808.00px;top:101.02px;font-size:12.5px;color:#F05A32;transform:scaleX(0.9290);transform-origin:0 0;-webkit-text-stroke:0.18px #E9E9E9">QR4Office</div>
<svg class="a" style="left:962px;top:104px;" width="5" height="3" viewBox="0 0 5 3"><path d="M0 0 H5 L2.5 2.8Z" fill="#555"/></svg>
<svg class="a" style="left:986px;top:102.5px;" width="6.5" height="6" viewBox="0 0 6.5 6"><path d="M0.3 0.3 L6.2 5.7 M6.2 0.3 L0.3 5.7" stroke="#444" stroke-width="1"/></svg>
<div class="a" style="left:808px;top:119px;width:187px;height:396px;background:#F0F0F0;border:1px solid #DCDCDC"></div>
<div class="a" style="left:809px;top:120px;width:185px;height:320px;background:#FFFFFF;"></div>
<div class="t ls" style="left:818.00px;top:133.11px;font-size:7.2px;color:#333333;transform:scaleX(0.9554);transform-origin:0 0;">Enter the URL/text you'd like to encode:</div>
<div class="a" style="left:818px;top:145px;width:14px;height:14px;background:#FFFFFF;border:1px solid #CFCFCF"></div>
<svg class="a" style="left:820px;top:147px;" width="11" height="10" viewBox="0 0 11 10"><rect x="0.5" y="0.5" width="5.5" height="9" fill="#DDEBF7" stroke="#3A7FC0" stroke-width="0.9"/><path d="M1.8 2.5 H4.8 M1.8 4.5 H4.8 M1.8 6.5 H4.8" stroke="#3A7FC0" stroke-width="0.7"/><path d="M6.5 5 H9 M7.8 3.5 L9.8 5 L7.8 6.5" fill="none" stroke="#F08A24" stroke-width="1.2"/></svg>
<div class="a" style="left:833px;top:145px;width:39px;height:14px;background:#FFFFFF;border:1px solid #CFCFCF"></div>
<div class="t ls" style="left:835.20px;top:149.11px;font-size:7.2px;color:#222;transform:scaleX(1.0716);transform-origin:0 0;">http://</div>
<div class="a" style="left:858px;top:147px;width:12px;height:10px;background:#F4F4F4;border:1px solid #7A7A7A"></div>
<svg class="a" style="left:861px;top:150px;" width="6" height="4" viewBox="0 0 6 4"><path d="M0.5 0.5 L3 3 L5.5 0.5" fill="none" stroke="#222" stroke-width="1"/></svg>
<div class="a" style="left:873px;top:145px;width:112px;height:14px;background:#FFFFFF;border:1px solid #D4D4D4"></div>
<div class="t ls" style="left:876.10px;top:149.11px;font-size:7.2px;color:#909090;transform:scaleX(0.9447);transform-origin:0 0;">bing.com</div>
<div class="a" style="left:818px;top:175px;width:167px;height:70px;background:transparent;border:1px solid #DEDEDE;border-radius:2px"></div>
<div class="a" style="left:823px;top:172px;width:29px;height:6px;background:#FFFFFF;"></div>
<div class="t ls" style="left:825.50px;top:172.51px;font-size:7.2px;color:#333333;transform:scaleX(0.9672);transform-origin:0 0;">Options</div>
<div class="t ls" style="left:823.90px;top:190.11px;font-size:7.2px;color:#333333;transform:scaleX(0.9424);transform-origin:0 0;">Color:</div>
<div class="a" style="left:853px;top:185px;width:30px;height:18px;background:#F0F0F0;border:1px solid #C9A898"></div>
<div class="a" style="left:856px;top:188px;width:16.5px;height:12px;background:#000;"></div>
<svg class="a" style="left:874.5px;top:191.5px;" width="6" height="5" viewBox="0 0 6 5"><path d="M0 0 H6 L3 4.5Z" fill="#111"/></svg>
<div class="t ls" style="left:893.70px;top:190.11px;font-size:7.2px;color:#333333;transform:scaleX(0.9424);transform-origin:0 0;">Background:</div>
<div class="a" style="left:940px;top:185px;width:30px;height:18px;background:#F0F0F0;border:1px solid #C9A898"></div>
<div class="a" style="left:942.5px;top:188px;width:16.5px;height:12px;background:#FFF;border:1px solid #777"></div>
<svg class="a" style="left:961.5px;top:191.5px;" width="6" height="5" viewBox="0 0 6 5"><path d="M0 0 H6 L3 4.5Z" fill="#111"/></svg>
<div class="t ls" style="left:824.00px;top:207.71px;font-size:7.2px;color:#333333;transform:scaleX(0.8746);transform-origin:0 0;">Size:</div>
<div class="a" style="left:853px;top:208px;width:121.5px;height:8px;background:#F7F7F7;border:1px solid #D6D6D6;border-radius:4px"></div>
<div class="a" style="left:866.5px;top:206.8px;width:10px;height:10.5px;background:#E2E2E2;border:1px solid #D2D2D2;border-radius:1px"></div>
<div class="t ls" style="left:824.00px;top:227.71px;font-size:7.2px;color:#333333;transform:scaleX(0.9552);transform-origin:0 0;">Error correction:</div>
<div class="a" style="left:880.5px;top:223.5px;width:63.5px;height:16px;background:#FFFFFF;border:1px solid #D0D0D0"></div>
<div class="t ls" style="left:884.60px;top:227.71px;font-size:7.2px;color:#222;transform:scaleX(0.9738);transform-origin:0 0;">Medium - 15%</div>
<div class="a" style="left:931.5px;top:226.7px;width:10.5px;height:10px;background:#F4F4F4;border:1px solid #6E6E6E"></div>
<svg class="a" style="left:934px;top:229.7px;" width="6" height="4" viewBox="0 0 6 4"><path d="M0.5 0.5 L3 3 L5.5 0.5" fill="none" stroke="#222" stroke-width="1"/></svg>
<svg class="a" style="left:925px;top:155px;" width="30" height="35" viewBox="0 0 30 35"><path d="M5 2.6 L23.2 9.6 L18.5 13.4 L26 26.9 L15.7 32 L7.8 19.9 L2.6 21.3Z" fill="#FF6450" stroke="#4A3028" stroke-width="0.9" stroke-linejoin="round"/></svg>
<div class="a" style="left:817.5px;top:259.5px;width:168px;height:83.5px;background:transparent;border:1px solid #DEDEDE;border-radius:2px"></div>
<div class="a" style="left:823px;top:257px;width:28px;height:6px;background:#FFFFFF;"></div>
<div class="t ls" style="left:825.00px;top:256.51px;font-size:7.2px;color:#333333;transform:scaleX(0.9333);transform-origin:0 0;">Preview</div>
<div class="t ns" style="left:872.20px;top:267.21px;font-size:7.2px;color:#333333;transform:scaleX(0.9194);transform-origin:0 0;font-style:italic">Full size: 75 x 75 px</div>
<div class="t ns" style="left:878.00px;top:278.81px;font-size:7.2px;color:#333333;transform:scaleX(0.9889);transform-origin:0 0;font-style:italic">http://bing.com</div>
<svg class="a" style="left:880px;top:293.2px;" width="43.4" height="43.4" viewBox="0 0 25 25"><g fill="#000" shape-rendering="crispEdges"><rect x="0" y="0" width="1.02" height="1.02"/><rect x="1" y="0" width="1.02" height="1.02"/><rect x="2" y="0" width="1.02" height="1.02"/><rect x="3" y="0" width="1.02" height="1.02"/><rect x="4" y="0" width="1.02" height="1.02"/><rect x="5" y="0" width="1.02" height="1.02"/><rect x="6" y="0" width="1.02" height="1.02"/><rect x="8" y="0" width="1.02" height="1.02"/><rect x="11" y="0" width="1.02" height="1.02"/><rect x="15" y="0" width="1.02" height="1.02"/><rect x="16" y="0" width="1.02" height="1.02"/><rect x="18" y="0" width="1.02" height="1.02"/><rect x="19" y="0" width="1.02" height="1.02"/><rect x="20" y="0" width="1.02" height="1.02"/><rect x="21" y="0" width="1.02" height="1.02"/><rect x="22" y="0" width="1.02" height="1.02"/><rect x="23" y="0" width="1.02" height="1.02"/><rect x="24" y="0" width="1.02" height="1.02"/><rect x="0" y="1" width="1.02" height="1.02"/><rect x="6" y="1" width="1.02" height="1.02"/><rect x="8" y="1" width="1.02" height="1.02"/><rect x="9" y="1" width="1.02" height="1.02"/><rect x="10" y="1" width="1.02" height="1.02"/><rect x="16" y="1" width="1.02" height="1.02"/><rect x="18" y="1" width="1.02" height="1.02"/><rect x="24" y="1" width="1.02" height="1.02"/><rect x="0" y="2" width="1.02" height="1.02"/><rect x="2" y="2" width="1.02" height="1.02"/><rect x="3" y="2" width="1.02" height="1.02"/><rect x="4" y="2" width="1.02" height="1.02"/><rect x="6" y="2" width="1.02" height="1.02"/><rect x="8" y="2" width="1.02" height="1.02"/><rect x="10" y="2" width="1.02" height="1.02"/><rect x="12" y="2" width="1.02" height="1.02"/><rect x="15" y="2" width="1.02" height="1.02"/><rect x="16" y="2" width="1.02" height="1.02"/><rect x="18" y="2" width="1.02" height="1.02"/><rect x="20" y="2" width="1.02" height="1.02"/><rect x="21" y="2" width="1.02" height="1.02"/><rect x="22" y="2" width="1.02" height="1.02"/><rect x="24" y="2" width="1.02" height="1.02"/><rect x="0" y="3" width="1.02" height="1.02"/><rect x="2" y="3" width="1.02" height="1.02"/><rect x="3" y="3" width="1.02" height="1.02"/><rect x="4" y="3" width="1.02" height="1.02"/><rect x="6" y="3" width="1.02" height="1.02"/><rect x="10" y="3" width="1.02" height="1.02"/><rect x="12" y="3" width="1.02" height="1.02"/><rect x="16" y="3" width="1.02" height="1.02"/><rect x="18" y="3" width="1.02" height="1.02"/><rect x="20" y="3" width="1.02" height="1.02"/><rect x="21" y="3" width="1.02" height="1.02"/><rect x="22" y="3" width="1.02" height="1.02"/><rect x="24" y="3" width="1.02" height="1.02"/><rect x="0" y="4" width="1.02" height="1.02"/><rect x="2" y="4" width="1.02" height="1.02"/><rect x="3" y="4" width="1.02" height="1.02"/><rect x="4" y="4" width="1.02" height="1.02"/><rect x="6" y="4" width="1.02" height="1.02"/><rect x="8" y="4" width="1.02" height="1.02"/><rect x="9" y="4" width="1.02" height="1.02"/><rect x="14" y="4" width="1.02" height="1.02"/><rect x="15" y="4" width="1.02" height="1.02"/><rect x="16" y="4" width="1.02" height="1.02"/><rect x="18" y="4" width="1.02" height="1.02"/><rect x="20" y="4" width="1.02" height="1.02"/><rect x="21" y="4" width="1.02" height="1.02"/><rect x="22" y="4" width="1.02" height="1.02"/><rect x="24" y="4" width="1.02" height="1.02"/><rect x="0" y="5" width="1.02" height="1.02"/><rect x="6" y="5" width="1.02" height="1.02"/><rect x="11" y="5" width="1.02" height="1.02"/><rect x="15" y="5" width="1.02" height="1.02"/><rect x="16" y="5" width="1.02" height="1.02"/><rect x="18" y="5" width="1.02" height="1.02"/><rect x="24" y="5" width="1.02" height="1.02"/><rect x="0" y="6" width="1.02" height="1.02"/><rect x="1" y="6" width="1.02" height="1.02"/><rect x="2" y="6" width="1.02" height="1.02"/><rect x="3" y="6" width="1.02" height="1.02"/><rect x="4" y="6" width="1.02" height="1.02"/><rect x="5" y="6" width="1.02" height="1.02"/><rect x="6" y="6" width="1.02" height="1.02"/><rect x="8" y="6" width="1.02" height="1.02"/><rect x="10" y="6" width="1.02" height="1.02"/><rect x="12" y="6" width="1.02" height="1.02"/><rect x="14" y="6" width="1.02" height="1.02"/><rect x="16" y="6" width="1.02" height="1.02"/><rect x="18" y="6" width="1.02" height="1.02"/><rect x="19" y="6" width="1.02" height="1.02"/><rect x="20" y="6" width="1.02" height="1.02"/><rect x="21" y="6" width="1.02" height="1.02"/><rect x="22" y="6" width="1.02" height="1.02"/><rect x="23" y="6" width="1.02" height="1.02"/><rect x="24" y="6" width="1.02" height="1.02"/><rect x="9" y="7" width="1.02" height="1.02"/><rect x="10" y="7" width="1.02" height="1.02"/><rect x="11" y="7" width="1.02" height="1.02"/><rect x="13" y="7" width="1.02" height="1.02"/><rect x="15" y="7" width="1.02" height="1.02"/><rect x="16" y="7" width="1.02" height="1.02"/><rect x="0" y="8" width="1.02" height="1.02"/><rect x="3" y="8" width="1.02" height="1.02"/><rect x="4" y="8" width="1.02" height="1.02"/><rect x="5" y="8" width="1.02" height="1.02"/><rect x="6" y="8" width="1.02" height="1.02"/><rect x="7" y="8" width="1.02" height="1.02"/><rect x="8" y="8" width="1.02" height="1.02"/><rect x="9" y="8" width="1.02" height="1.02"/><rect x="12" y="8" width="1.02" height="1.02"/><rect x="13" y="8" width="1.02" height="1.02"/><rect x="16" y="8" width="1.02" height="1.02"/><rect x="17" y="8" width="1.02" height="1.02"/><rect x="20" y="8" width="1.02" height="1.02"/><rect x="22" y="8" width="1.02" height="1.02"/><rect x="23" y="8" width="1.02" height="1.02"/><rect x="24" y="8" width="1.02" height="1.02"/><rect x="0" y="9" width="1.02" height="1.02"/><rect x="2" y="9" width="1.02" height="1.02"/><rect x="3" y="9" width="1.02" height="1.02"/><rect x="4" y="9" width="1.02" height="1.02"/><rect x="5" y="9" width="1.02" height="1.02"/><rect x="7" y="9" width="1.02" height="1.02"/><rect x="8" y="9" width="1.02" height="1.02"/><rect x="11" y="9" width="1.02" height="1.02"/><rect x="13" y="9" width="1.02" height="1.02"/><rect x="16" y="9" width="1.02" height="1.02"/><rect x="19" y="9" width="1.02" height="1.02"/><rect x="20" y="9" width="1.02" height="1.02"/><rect x="21" y="9" width="1.02" height="1.02"/><rect x="22" y="9" width="1.02" height="1.02"/><rect x="23" y="9" width="1.02" height="1.02"/><rect x="5" y="10" width="1.02" height="1.02"/><rect x="6" y="10" width="1.02" height="1.02"/><rect x="7" y="10" width="1.02" height="1.02"/><rect x="8" y="10" width="1.02" height="1.02"/><rect x="10" y="10" width="1.02" height="1.02"/><rect x="11" y="10" width="1.02" height="1.02"/><rect x="13" y="10" width="1.02" height="1.02"/><rect x="15" y="10" width="1.02" height="1.02"/><rect x="16" y="10" width="1.02" height="1.02"/><rect x="19" y="10" width="1.02" height="1.02"/><rect x="20" y="10" width="1.02" height="1.02"/><rect x="21" y="10" width="1.02" height="1.02"/><rect x="24" y="10" width="1.02" height="1.02"/><rect x="1" y="11" width="1.02" height="1.02"/><rect x="2" y="11" width="1.02" height="1.02"/><rect x="5" y="11" width="1.02" height="1.02"/><rect x="8" y="11" width="1.02" height="1.02"/><rect x="12" y="11" width="1.02" height="1.02"/><rect x="13" y="11" width="1.02" height="1.02"/><rect x="17" y="11" width="1.02" height="1.02"/><rect x="20" y="11" width="1.02" height="1.02"/><rect x="21" y="11" width="1.02" height="1.02"/><rect x="22" y="11" width="1.02" height="1.02"/><rect x="23" y="11" width="1.02" height="1.02"/><rect x="24" y="11" width="1.02" height="1.02"/><rect x="2" y="12" width="1.02" height="1.02"/><rect x="3" y="12" width="1.02" height="1.02"/><rect x="4" y="12" width="1.02" height="1.02"/><rect x="6" y="12" width="1.02" height="1.02"/><rect x="7" y="12" width="1.02" height="1.02"/><rect x="9" y="12" width="1.02" height="1.02"/><rect x="10" y="12" width="1.02" height="1.02"/><rect x="12" y="12" width="1.02" height="1.02"/><rect x="13" y="12" width="1.02" height="1.02"/><rect x="16" y="12" width="1.02" height="1.02"/><rect x="18" y="12" width="1.02" height="1.02"/><rect x="19" y="12" width="1.02" height="1.02"/><rect x="24" y="12" width="1.02" height="1.02"/><rect x="0" y="13" width="1.02" height="1.02"/><rect x="2" y="13" width="1.02" height="1.02"/><rect x="4" y="13" width="1.02" height="1.02"/><rect x="5" y="13" width="1.02" height="1.02"/><rect x="7" y="13" width="1.02" height="1.02"/><rect x="8" y="13" width="1.02" height="1.02"/><rect x="10" y="13" width="1.02" height="1.02"/><rect x="13" y="13" width="1.02" height="1.02"/><rect x="14" y="13" width="1.02" height="1.02"/><rect x="15" y="13" width="1.02" height="1.02"/><rect x="16" y="13" width="1.02" height="1.02"/><rect x="20" y="13" width="1.02" height="1.02"/><rect x="23" y="13" width="1.02" height="1.02"/><rect x="0" y="14" width="1.02" height="1.02"/><rect x="1" y="14" width="1.02" height="1.02"/><rect x="3" y="14" width="1.02" height="1.02"/><rect x="6" y="14" width="1.02" height="1.02"/><rect x="8" y="14" width="1.02" height="1.02"/><rect x="9" y="14" width="1.02" height="1.02"/><rect x="11" y="14" width="1.02" height="1.02"/><rect x="12" y="14" width="1.02" height="1.02"/><rect x="13" y="14" width="1.02" height="1.02"/><rect x="15" y="14" width="1.02" height="1.02"/><rect x="17" y="14" width="1.02" height="1.02"/><rect x="18" y="14" width="1.02" height="1.02"/><rect x="19" y="14" width="1.02" height="1.02"/><rect x="20" y="14" width="1.02" height="1.02"/><rect x="21" y="14" width="1.02" height="1.02"/><rect x="22" y="14" width="1.02" height="1.02"/><rect x="23" y="14" width="1.02" height="1.02"/><rect x="24" y="14" width="1.02" height="1.02"/><rect x="0" y="15" width="1.02" height="1.02"/><rect x="3" y="15" width="1.02" height="1.02"/><rect x="7" y="15" width="1.02" height="1.02"/><rect x="8" y="15" width="1.02" height="1.02"/><rect x="11" y="15" width="1.02" height="1.02"/><rect x="15" y="15" width="1.02" height="1.02"/><rect x="17" y="15" width="1.02" height="1.02"/><rect x="20" y="15" width="1.02" height="1.02"/><rect x="22" y="15" width="1.02" height="1.02"/><rect x="24" y="15" width="1.02" height="1.02"/><rect x="0" y="16" width="1.02" height="1.02"/><rect x="2" y="16" width="1.02" height="1.02"/><rect x="4" y="16" width="1.02" height="1.02"/><rect x="5" y="16" width="1.02" height="1.02"/><rect x="6" y="16" width="1.02" height="1.02"/><rect x="7" y="16" width="1.02" height="1.02"/><rect x="8" y="16" width="1.02" height="1.02"/><rect x="9" y="16" width="1.02" height="1.02"/><rect x="10" y="16" width="1.02" height="1.02"/><rect x="14" y="16" width="1.02" height="1.02"/><rect x="16" y="16" width="1.02" height="1.02"/><rect x="17" y="16" width="1.02" height="1.02"/><rect x="18" y="16" width="1.02" height="1.02"/><rect x="19" y="16" width="1.02" height="1.02"/><rect x="20" y="16" width="1.02" height="1.02"/><rect x="22" y="16" width="1.02" height="1.02"/><rect x="23" y="16" width="1.02" height="1.02"/><rect x="8" y="17" width="1.02" height="1.02"/><rect x="11" y="17" width="1.02" height="1.02"/><rect x="12" y="17" width="1.02" height="1.02"/><rect x="13" y="17" width="1.02" height="1.02"/><rect x="14" y="17" width="1.02" height="1.02"/><rect x="16" y="17" width="1.02" height="1.02"/><rect x="20" y="17" width="1.02" height="1.02"/><rect x="23" y="17" width="1.02" height="1.02"/><rect x="0" y="18" width="1.02" height="1.02"/><rect x="1" y="18" width="1.02" height="1.02"/><rect x="2" y="18" width="1.02" height="1.02"/><rect x="3" y="18" width="1.02" height="1.02"/><rect x="4" y="18" width="1.02" height="1.02"/><rect x="5" y="18" width="1.02" height="1.02"/><rect x="6" y="18" width="1.02" height="1.02"/><rect x="8" y="18" width="1.02" height="1.02"/><rect x="9" y="18" width="1.02" height="1.02"/><rect x="10" y="18" width="1.02" height="1.02"/><rect x="11" y="18" width="1.02" height="1.02"/><rect x="16" y="18" width="1.02" height="1.02"/><rect x="18" y="18" width="1.02" height="1.02"/><rect x="20" y="18" width="1.02" height="1.02"/><rect x="21" y="18" width="1.02" height="1.02"/><rect x="24" y="18" width="1.02" height="1.02"/><rect x="0" y="19" width="1.02" height="1.02"/><rect x="6" y="19" width="1.02" height="1.02"/><rect x="8" y="19" width="1.02" height="1.02"/><rect x="9" y="19" width="1.02" height="1.02"/><rect x="12" y="19" width="1.02" height="1.02"/><rect x="14" y="19" width="1.02" height="1.02"/><rect x="15" y="19" width="1.02" height="1.02"/><rect x="16" y="19" width="1.02" height="1.02"/><rect x="20" y="19" width="1.02" height="1.02"/><rect x="23" y="19" width="1.02" height="1.02"/><rect x="0" y="20" width="1.02" height="1.02"/><rect x="2" y="20" width="1.02" height="1.02"/><rect x="3" y="20" width="1.02" height="1.02"/><rect x="4" y="20" width="1.02" height="1.02"/><rect x="6" y="20" width="1.02" height="1.02"/><rect x="8" y="20" width="1.02" height="1.02"/><rect x="9" y="20" width="1.02" height="1.02"/><rect x="10" y="20" width="1.02" height="1.02"/><rect x="12" y="20" width="1.02" height="1.02"/><rect x="13" y="20" width="1.02" height="1.02"/><rect x="14" y="20" width="1.02" height="1.02"/><rect x="15" y="20" width="1.02" height="1.02"/><rect x="16" y="20" width="1.02" height="1.02"/><rect x="17" y="20" width="1.02" height="1.02"/><rect x="18" y="20" width="1.02" height="1.02"/><rect x="19" y="20" width="1.02" height="1.02"/><rect x="20" y="20" width="1.02" height="1.02"/><rect x="21" y="20" width="1.02" height="1.02"/><rect x="23" y="20" width="1.02" height="1.02"/><rect x="0" y="21" width="1.02" height="1.02"/><rect x="2" y="21" width="1.02" height="1.02"/><rect x="3" y="21" width="1.02" height="1.02"/><rect x="4" y="21" width="1.02" height="1.02"/><rect x="6" y="21" width="1.02" height="1.02"/><rect x="8" y="21" width="1.02" height="1.02"/><rect x="10" y="21" width="1.02" height="1.02"/><rect x="14" y="21" width="1.02" height="1.02"/><rect x="15" y="21" width="1.02" height="1.02"/><rect x="18" y="21" width="1.02" height="1.02"/><rect x="21" y="21" width="1.02" height="1.02"/><rect x="24" y="21" width="1.02" height="1.02"/><rect x="0" y="22" width="1.02" height="1.02"/><rect x="2" y="22" width="1.02" height="1.02"/><rect x="3" y="22" width="1.02" height="1.02"/><rect x="4" y="22" width="1.02" height="1.02"/><rect x="6" y="22" width="1.02" height="1.02"/><rect x="12" y="22" width="1.02" height="1.02"/><rect x="14" y="22" width="1.02" height="1.02"/><rect x="15" y="22" width="1.02" height="1.02"/><rect x="17" y="22" width="1.02" height="1.02"/><rect x="19" y="22" width="1.02" height="1.02"/><rect x="20" y="22" width="1.02" height="1.02"/><rect x="22" y="22" width="1.02" height="1.02"/><rect x="23" y="22" width="1.02" height="1.02"/><rect x="24" y="22" width="1.02" height="1.02"/><rect x="0" y="23" width="1.02" height="1.02"/><rect x="6" y="23" width="1.02" height="1.02"/><rect x="9" y="23" width="1.02" height="1.02"/><rect x="10" y="23" width="1.02" height="1.02"/><rect x="14" y="23" width="1.02" height="1.02"/><rect x="19" y="23" width="1.02" height="1.02"/><rect x="20" y="23" width="1.02" height="1.02"/><rect x="22" y="23" width="1.02" height="1.02"/><rect x="23" y="23" width="1.02" height="1.02"/><rect x="24" y="23" width="1.02" height="1.02"/><rect x="0" y="24" width="1.02" height="1.02"/><rect x="1" y="24" width="1.02" height="1.02"/><rect x="2" y="24" width="1.02" height="1.02"/><rect x="3" y="24" width="1.02" height="1.02"/><rect x="4" y="24" width="1.02" height="1.02"/><rect x="5" y="24" width="1.02" height="1.02"/><rect x="6" y="24" width="1.02" height="1.02"/><rect x="8" y="24" width="1.02" height="1.02"/><rect x="9" y="24" width="1.02" height="1.02"/><rect x="13" y="24" width="1.02" height="1.02"/><rect x="14" y="24" width="1.02" height="1.02"/><rect x="16" y="24" width="1.02" height="1.02"/><rect x="17" y="24" width="1.02" height="1.02"/><rect x="21" y="24" width="1.02" height="1.02"/><rect x="24" y="24" width="1.02" height="1.02"/></g></svg>
<svg class="a" style="left:812px;top:449.5px;" width="20" height="20" viewBox="0 0 20 20"><circle cx="10" cy="10" r="9.5" fill="#FFF" stroke="#CFCFCF" stroke-width="0.9"/><path d="M10 3.5 C7 3.5 5.6 5.6 5.6 7.8 C5.6 10 7.5 11 7.8 13 H12.2 C12.5 11 14.4 10 14.4 7.8 C14.4 5.6 13 3.5 10 3.5Z" fill="#F8D866" stroke="#E0B848" stroke-width="0.5"/><circle cx="8.6" cy="7.2" r="1.8" fill="#E6F0B0" opacity="0.8"/><rect x="8" y="13.3" width="4" height="1.2" fill="#9A9A9A"/><rect x="8.3" y="14.7" width="3.4" height="1.2" fill="#7A7A7A"/></svg>
<div class="a" style="left:858.3px;top:449px;width:86.5px;height:22px;background:#0070A5;"></div>
<div class="t ns" style="left:888.70px;top:455.57px;font-size:10.2px;color:#FFFFFF;transform:scaleX(0.9917);transform-origin:0 0;">Insert</div>
<svg class="a" style="left:971px;top:449.5px;" width="20" height="20" viewBox="0 0 20 20"><circle cx="10" cy="10" r="9.5" fill="#FFF" stroke="#CFCFCF" stroke-width="0.9"/><circle cx="10" cy="10" r="6.3" fill="#2569A8" stroke="#7D8A99" stroke-width="1.3"/><circle cx="10" cy="6.9" r="0.95" fill="#FFF"/><rect x="9.15" y="8.6" width="1.7" height="4.6" fill="#FFF"/></svg>
<div class="t ns" style="left:826.80px;top:479.87px;font-size:7.0px;color:#333333;transform:scaleX(0.9747);transform-origin:0 0;font-style:italic">You can also right-click on the preview image and</div>
<div class="t ns" style="left:826.80px;top:489.07px;font-size:7.0px;color:#333333;transform:scaleX(0.9353);transform-origin:0 0;font-style:italic">"Copy" &rarr; "Paste Special", or "Save Picture As" and</div>
<div class="t ns" style="left:874.70px;top:498.27px;font-size:7.0px;color:#333333;transform:scaleX(1.0010);transform-origin:0 0;font-style:italic">insert it manually.</div>
<div class="t " style="left:3.20px;top:525.77px;font-size:7px;color:#3A3A3A;transform:scaleX(0.9489);transform-origin:0 0;">Diapositiva 1 de 1</div>
<svg class="a" style="left:67px;top:525px;" width="9" height="8" viewBox="0 0 9 8"><path d="M0.5 0.5 H4 V7.5 H0.5Z M4 0.5 H8 V3.5 L6 7.5 H4" fill="none" stroke="#777" stroke-width="0.8"/><path d="M5.5 4.5 L7 6 L8.5 3" fill="none" stroke="#777" stroke-width="0.8"/></svg>
<div class="t " style="left:85.20px;top:525.77px;font-size:7px;color:#3A3A3A;transform:scaleX(0.9370);transform-origin:0 0;">Español (Colombia)</div>
<svg class="a" style="left:702px;top:525px;" width="7" height="8" viewBox="0 0 7 8"><path d="M1 7.5 H6 L5 4 H2Z" fill="#8A8A8A"/><path d="M3.5 0.5 V4" stroke="#8A8A8A" stroke-width="1.2"/></svg>
<div class="t " style="left:710.80px;top:525.77px;font-size:7px;color:#3A3A3A;transform:scaleX(0.9406);transform-origin:0 0;">Notas</div>
<svg class="a" style="left:739px;top:524.5px;" width="10" height="9" viewBox="0 0 10 9"><path d="M0.5 0.5 H9.5 V6 H4 L2 8.5 V6 H0.5Z" fill="#6A6A6A"/></svg>
<div class="t " style="left:749.20px;top:525.77px;font-size:7px;color:#3A3A3A;transform:scaleX(0.9475);transform-origin:0 0;">Comentarios</div>
<div class="a" style="left:798px;top:523px;width:21.5px;height:11px;background:#D5CCCC;"></div>
<svg class="a" style="left:803.5px;top:524.5px;" width="10" height="8" viewBox="0 0 10 8"><rect x="0.5" y="0.5" width="9" height="7" fill="none" stroke="#777" stroke-width="0.9"/><rect x="2.5" y="2" width="5" height="3.5" fill="none" stroke="#777" stroke-width="0.7"/></svg>
<svg class="a" style="left:826.5px;top:524.5px;" width="9" height="8" viewBox="0 0 9 8"><rect x="0.5" y="0.5" width="3.5" height="3" fill="none" stroke="#777" stroke-width="0.7"/><rect x="5" y="0.5" width="3.5" height="3" fill="none" stroke="#777" stroke-width="0.7"/><rect x="0.5" y="4.5" width="3.5" height="3" fill="none" stroke="#777" stroke-width="0.7"/><rect x="5" y="4.5" width="3.5" height="3" fill="none" stroke="#777" stroke-width="0.7"/></svg>
<svg class="a" style="left:848px;top:524.5px;" width="9" height="8" viewBox="0 0 9 8"><path d="M0.5 0.8 C2 0.3 3.5 0.3 4.5 1.2 C5.5 0.3 7 0.3 8.5 0.8 V7.5 C7 7 5.5 7 4.5 7.8 C3.5 7 2 7 0.5 7.5Z M4.5 1.2 V7.8" fill="none" stroke="#777" stroke-width="0.8"/></svg>
<svg class="a" style="left:871px;top:524.5px;" width="7" height="9" viewBox="0 0 7 9"><path d="M0 0.5 H7 M1 0.5 V5 H6 V0.5 M3.5 5 V8.5 M2 8.5 H5" fill="none" stroke="#777" stroke-width="0.8"/></svg>
<div class="a" style="left:888px;top:528.5px;width:4px;height:1px;background:#555;"></div>
<div class="a" style="left:895px;top:528.5px;width:57px;height:1px;background:#B8B8B8;"></div>
<div class="a" style="left:918.3px;top:525.5px;width:3px;height:7px;background:#555;"></div>
<svg class="a" style="left:954px;top:525.8px;" width="6" height="6" viewBox="0 0 6 6"><path d="M3 0 V6 M0 3 H6" stroke="#444" stroke-width="1.1"/></svg>
<div class="t " style="left:965.00px;top:525.77px;font-size:7px;color:#555;transform:scaleX(0.8422);transform-origin:0 0;">87%</div>
<svg class="a" style="left:968px;top:504.5px;" width="31" height="31" viewBox="0 0 31 31"><circle cx="15.4" cy="15.1" r="14.6" fill="#FFFFFF" opacity="0.55"/><path d="M18 22.8 C15 20 9 18 6.2 13 C4.5 9 7.5 2.5 13.4 2.5 C19 2.5 22.5 6 21.6 10 C21 13 19 18 18.5 21" fill="none" stroke="#3A8FD0" stroke-width="1"/></svg>
<svg class="a" style="left:984.5px;top:525.5px;" width="8.5" height="7" viewBox="0 0 8.5 7"><rect x="0.5" y="0.5" width="7.5" height="6" fill="none" stroke="#777" stroke-width="0.8"/><path d="M2 5 L6 1.8" stroke="#2A8A8A" stroke-width="1"/></svg>
</body></html>
